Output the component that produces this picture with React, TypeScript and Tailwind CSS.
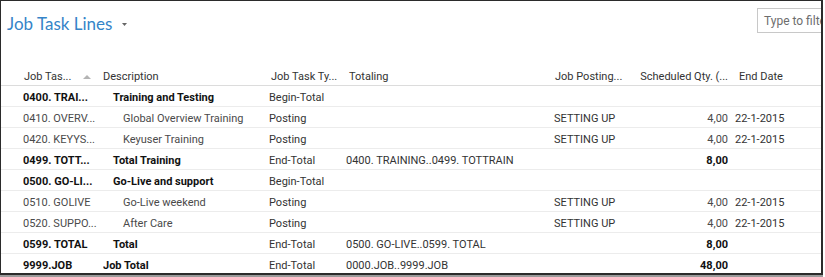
import { ReactNode } from "react";

type Row = {
  no: string;
  desc: string;
  indent: 0 | 1 | 2;
  bold?: boolean;
  type: string;
  totaling?: string;
  posting?: string;
  qty?: string;
  date?: string;
};

const rows: Row[] = [
  { no: "0400. TRAI...", desc: "Training and Testing", indent: 1, bold: true, type: "Begin-Total" },
  { no: "0410. OVERV...", desc: "Global Overview Training", indent: 2, type: "Posting", posting: "SETTING UP", qty: "4,00", date: "22-1-2015" },
  { no: "0420. KEYYS...", desc: "Keyuser Training", indent: 2, type: "Posting", posting: "SETTING UP", qty: "4,00", date: "22-1-2015" },
  { no: "0499. TOTT...", desc: "Total Training", indent: 1, bold: true, type: "End-Total", totaling: "0400. TRAINING..0499. TOTTRAIN", qty: "8,00" },
  { no: "0500. GO-LI...", desc: "Go-Live and support", indent: 1, bold: true, type: "Begin-Total" },
  { no: "0510. GOLIVE", desc: "Go-Live weekend", indent: 2, type: "Posting", posting: "SETTING UP", qty: "4,00", date: "22-1-2015" },
  { no: "0520. SUPPO...", desc: "After Care", indent: 2, type: "Posting", posting: "SETTING UP", qty: "4,00", date: "22-1-2015" },
  { no: "0599. TOTAL", desc: "Total", indent: 1, bold: true, type: "End-Total", totaling: "0500. GO-LIVE..0599. TOTAL", qty: "8,00" },
  { no: "9999.JOB", desc: "Job Total", indent: 0, bold: true, type: "End-Total", totaling: "0000.JOB..9999.JOB", qty: "48,00" },
];

const indentClass = ["pl-0", "pl-[10px]", "pl-[20px]"];

// shared column layout for header + rows
const cols = "grid grid-cols-[80px_166px_77px_208px_80px_94px_1fr] items-center pl-[22px] leading-[16px]";

function Cell({ children, className = "" }: { children?: ReactNode; className?: string }) {
  return <div className={`whitespace-nowrap overflow-hidden ${className}`}>{children}</div>;
}

export default function App() {
  return (
    <div className="w-[825px] h-[277px] bg-white">
      <div
        className="w-[823px] h-[275px] border-t border-l border-r-2 border-b-2 border-[#2b2b2b] shadow-[0_2px_0_#9a9a9a] overflow-hidden flex flex-col bg-white text-[11px]"
        style={{ fontFamily: "Roboto, 'Open Sans', sans-serif" }}
      >
        {/* Title bar */}
        <div className="h-[64px] shrink-0 flex items-start">
          <div className="flex items-center pl-[6px] pt-[14px]">
            <span
              className="text-[17px] font-normal text-[#3584c8] leading-none"
              style={{ fontFamily: "Lato, Roboto, sans-serif" }}
            >
              Job Task Lines
            </span>
            <svg className="ml-[10px] mt-[1px]" width="5" height="3" viewBox="0 0 5 3">
              <path d="M0 0 L5 0 L2.5 3 Z" fill="#666" />
            </svg>
          </div>
          <div className="ml-auto mt-[7px] w-[64px] h-[25px] border border-r-0 border-[#c8c8c8] flex items-center pl-[6px] overflow-hidden whitespace-nowrap text-[12px] text-[#6d6d6d]">
            Type to filter
          </div>
        </div>

        {/* Column header */}
        <div className={`${cols} h-[21px] shrink-0 pt-[4px] border-b border-[#dcdcdc] text-[#333]`}>
          <Cell className="flex items-center pl-[1px]">
            <span className="w-[59px]">Job Tas...</span>
            <svg width="8" height="4" viewBox="0 0 8 4">
              <path d="M0 4 L4 0 L8 4 Z" fill="#b4b4b4" />
            </svg>
          </Cell>
          <Cell>Description</Cell>
          <Cell className="pl-[2px]">Job Task Ty...</Cell>
          <Cell className="pl-[3px]">Totaling</Cell>
          <Cell className="pl-[1px]">Job Posting...</Cell>
          <Cell className="text-right">Scheduled Qty. (...</Cell>
          <Cell className="pl-[11px]">End Date</Cell>
        </div>

        {/* Rows */}
        {rows.map((r, i) => (
          <div
            key={r.no}
            className={`${cols} h-[21px] pt-[3px] shrink-0 ${i < rows.length - 1 ? "border-b border-[#ececec]" : ""} ${
              r.bold ? "font-bold text-[#111]" : "text-[#4a4a4a]"
            }`}
          >
            <Cell>{r.no}</Cell>
            <Cell className={indentClass[r.indent]}>{r.desc}</Cell>
            <Cell className="font-normal text-[#333]">{r.type}</Cell>
            <Cell className="font-normal text-[#333]">{r.totaling}</Cell>
            <Cell className="font-normal text-[#333]">{r.posting}</Cell>
            <Cell className="text-right">{r.qty}</Cell>
            <Cell className="pl-[7px] font-normal text-[#333]">{r.date}</Cell>
          </div>
        ))}
      </div>
    </div>
  );
}
